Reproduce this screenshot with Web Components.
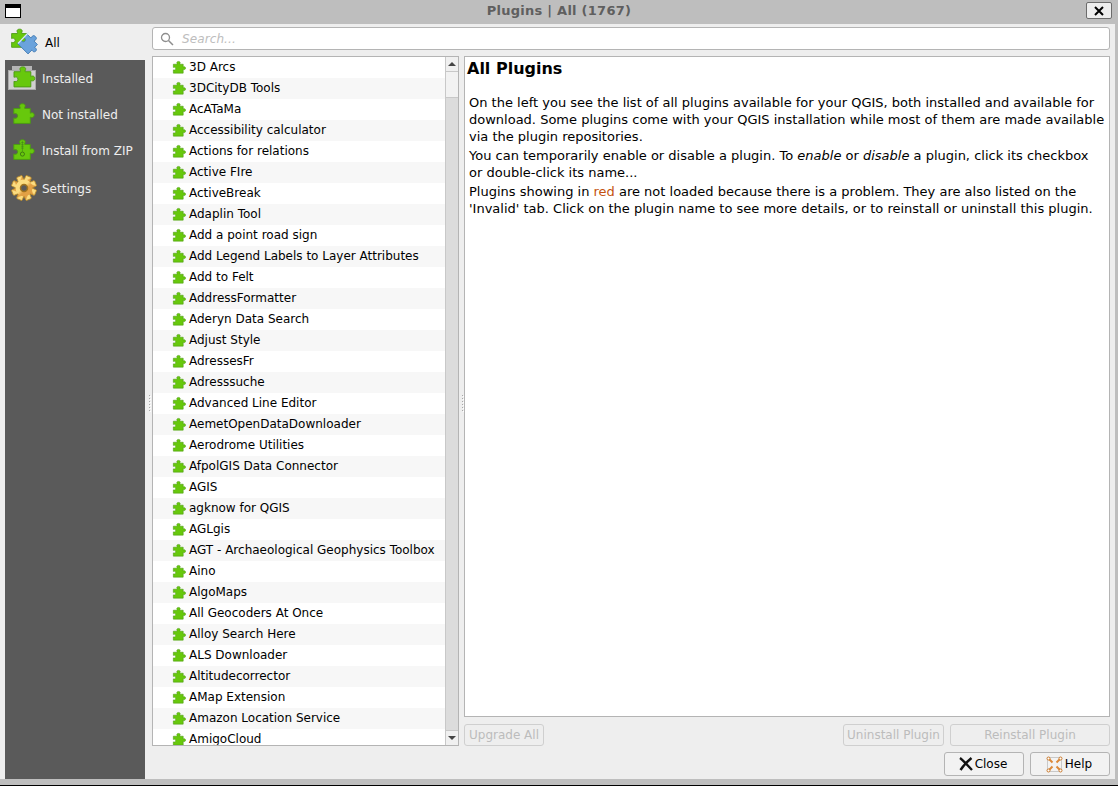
<!DOCTYPE html>
<html>
<head>
<meta charset="utf-8">
<title>Plugins</title>
<style>
html, body { margin: 0; height: 100%; background: #bebebe; overflow: hidden; }
body { font: 12px "DejaVu Sans", sans-serif; }
</style>
</head>
<body>
<qgis-plugin-manager></qgis-plugin-manager>

<script>
const PUZZLE = 'M6.500 3.600C6 3 6 1.500 8 1.500S10 3 9.500 3.600V4.500H13V7.500C13.700 7 15.500 7 15.500 8.700S13.700 10.400 13 10V14H2.500V10.500C3 11 5 10.800 5 9.200S3 7.500 2.500 8V4.500H6.500z'
const GREEN = 'fill="#67c80c" stroke="#4c9a14" stroke-width=".6"'

function puzzle(size, box = '0 0 16 16'){
    return `<svg width="${size}" height="${size}" viewBox="${box}"><path d="${PUZZLE}" ${GREEN}/></svg>`
}

function gear(){
    let teeth = ''
    for(let a = 0; a < 360; a += 45){
        teeth += `<rect x="10" y="0.500" width="6" height="7" rx="1" transform="rotate(${a} 13 13)"/>`
    }
    return `<svg width="26" height="26" viewBox="0 0 26 26">
        <defs><linearGradient id="g" x1="0" y1="0" x2="1" y2="1"><stop offset=".45" stop-color="#fbdc80"/><stop offset=".6" stop-color="#e2a044"/></linearGradient></defs>
        <g fill="url(#g)" stroke="#b98a2a" stroke-width=".8" transform="translate(13 13) rotate(22.500) translate(-13 -13)">${teeth}</g>
        <circle cx="13" cy="13" r="8.500" fill="url(#g)"/>
        <circle cx="13" cy="13" r="3.500" fill="#5a5a5a" stroke="#a0741f" stroke-width="1.500"/>
    </svg>`
}

const ICONS = {
    all: `<svg width="30" height="28" viewBox="0 0 30 28">
        <path d="${PUZZLE}" ${GREEN} transform="translate(-2 -1) scale(1.450)"/>
        <path d="${PUZZLE}" fill="#6ba3dc" stroke="#3f78b0" stroke-width=".6" transform="translate(19 16) rotate(45) scale(1.400) translate(-8.500 -8.500)"/>
        <path d="M8 15.500L19 4" stroke="#d8e8f8" stroke-width="1.200"/>
    </svg>`,
    installed: `<svg width="28" height="24" viewBox="0 0 28 24" style="margin-left:-3px">
        <rect x="4" y="0" width="20" height="5" fill="#b5b5b5"/>
        <rect x=".5" y="4.500" width="27" height="19" fill="#d0d0d0" stroke="#a9a9a9"/>
        <path d="${PUZZLE}" ${GREEN} transform="translate(2 -1.500) scale(1.600)"/>
    </svg>`,
    missing: puzzle(22, '2 1 14 14'),
    zip: `<svg width="22" height="22" viewBox="2 1 14 14">
        <path d="${PUZZLE}" ${GREEN}/>
        <path d="M7.200 3.200h1.600M7.200 4.400h1.600M7.200 5.600h1.600M7.200 6.800h1.600M8 2.400V9" stroke="#3d7a1c" stroke-width=".35"/>
        <circle cx="8" cy="10.600" r="1.300" fill="none" stroke="#2f5e12" stroke-width=".45"/>
    </svg>`,
    settings: gear()
}

const PLUGINS = [
    '3D Arcs', '3DCityDB Tools', 'AcATaMa', 'Accessibility calculator', 'Actions for relations',
    'Active FIre', 'ActiveBreak', 'Adaplin Tool', 'Add a point road sign', 'Add Legend Labels to Layer Attributes',
    'Add to Felt', 'AddressFormatter', 'Aderyn Data Search', 'Adjust Style', 'AdressesFr',
    'Adresssuche', 'Advanced Line Editor', 'AemetOpenDataDownloader', 'Aerodrome Utilities', 'AfpolGIS Data Connector',
    'AGIS', 'agknow for QGIS', 'AGLgis', 'AGT - Archaeological Geophysics Toolbox', 'Aino',
    'AlgoMaps', 'All Geocoders At Once', 'Alloy Search Here', 'ALS Downloader', 'Altitudecorrector',
    'AMap Extension', 'Amazon Location Service', 'AmigoCloud'
]


class TitleBar extends HTMLElement{
    connectedCallback(){
        this.attachShadow({mode:'open'}).innerHTML = `
        <style>
        :host { display: flex; align-items: center; height: 24px; background: #bebebe; position: relative; flex: none; }
        #menu { position: absolute; left: 5px; top: 4px; width: 14px; height: 9px; border: 1px solid #000; border-top-width: 4px; background: #fff; }
        #title { flex: 1; text-align: center; font: bold 13px "DejaVu Sans", sans-serif; color: #5f5f5f; letter-spacing: .25px; margin-top: -4px; }
        #close { position: absolute; left: 1086px; top: 2px; width: 26px; height: 17px; box-sizing: border-box; border: 1px solid #6c6c6c; border-radius: 2px; background: #eee; display: flex; align-items: center; justify-content: center; }
        </style>
        <div id="menu"></div>
        <div id="title"><slot></slot></div>
        <div id="close"><svg width="10" height="10" viewBox="0 0 10 10"><path d="M1 1l8 8M9 1L1 9" stroke="#000" stroke-width="2"/></svg></div>
        `
    }
}


class SideItem extends HTMLElement{
    connectedCallback(){
        const active = this.hasAttribute('active')
        this.attachShadow({mode:'open'}).innerHTML = `
        <style>
        :host { display: flex; align-items: center; height: ${this.getAttribute('h') || 36}px; color: ${active ? '#000' : '#eee'}; background: ${active ? '#eee' : 'transparent'}; font-size: 12px; }
        #icon { width: ${active ? 40 : 37}px; flex: none; display: flex; justify-content: center; }
        #label { padding-top: 2px; }
        </style>
        <div id="icon">${ICONS[this.getAttribute('icon')]}</div>
        <div id="label"><slot></slot></div>
        `
    }
}


class SideBar extends HTMLElement{
    connectedCallback(){
        this.attachShadow({mode:'open'}).innerHTML = `
        <style>
        :host { display: block; width: 140px; margin-left: 5px; flex: none; background: #5a5a5a; }
        </style>
        <slot></slot>
        `
    }
}


class SplitHandle extends HTMLElement{
    connectedCallback(){
        const dots = '<i></i>'.repeat(6)
        this.attachShadow({mode:'open'}).innerHTML = `
        <style>
        :host { display: flex; flex-direction: column; justify-content: center; gap: 2px; flex: none; box-sizing: border-box; width: ${this.getAttribute('w')}px; padding: ${this.getAttribute('top')}px 0 0 ${this.getAttribute('x')}px; }
        i { display: block; width: 1px; height: 1px; background: #a8a8a8; box-shadow: 1px 1px #fff; }
        </style>
        ${dots}
        `
    }
}


class SearchBox extends HTMLElement{
    connectedCallback(){
        this.attachShadow({mode:'open'}).innerHTML = `
        <style>
        :host { display: flex; align-items: center; height: 23px; box-sizing: border-box; background: #fff; border: 1px solid #b4b4b4; border-radius: 3px; padding-left: 7px; gap: 8px; flex: none; }
        span { font: italic 12px "DejaVu Sans", sans-serif; color: #bdbdbd; letter-spacing: .1px; }
        </style>
        <svg width="14" height="14" viewBox="0 0 14 14"><circle cx="5.500" cy="5.500" r="4" fill="none" stroke="#8e8e8e" stroke-width="1.300"/><path d="M8.500 8.500l4.500 4.500" stroke="#8e8e8e" stroke-width="1.500"/></svg>
        <span>${this.getAttribute('placeholder')}</span>
        `
    }
}


class PluginRow extends HTMLElement{
    connectedCallback(){
        this.attachShadow({mode:'open'}).innerHTML = `
        <style>
        :host { display: flex; align-items: center; height: 21px; box-sizing: border-box; padding: 0 0 2px 18px; flex: none; gap: 3px; white-space: nowrap; color: #000; font-size: 12px; }
        :host(:nth-child(even)) { background: #f7f7f7; }
        svg { flex: none; margin-top: 2px; }
        </style>
        ${puzzle(15)}
        <slot></slot>
        `
    }
}


class PluginList extends HTMLElement{
    connectedCallback(){
        this.attachShadow({mode:'open'}).innerHTML = `
        <style>
        :host { display: flex; width: 307px; box-sizing: border-box; border: 1px solid #b4b4b4; background: #fff; flex: none; overflow: hidden; }
        #rows { flex: 1; display: flex; flex-direction: column; overflow: hidden; min-width: 0; }
        #bar { width: 13px; box-sizing: border-box; flex: none; display: flex; flex-direction: column; border-left: 1px solid #c8c8c8; background: #dcdcdc; }
        .arrow { height: 15px; flex: none; background: #f0f0f0; display: flex; align-items: center; justify-content: center; box-sizing: border-box; }
        .arrow i { width: 0; height: 0; border: 4px solid transparent; }
        #up { border-bottom: 1px solid #c8c8c8; }
        #up i { border-bottom: 4px solid #444; border-top-width: 0; }
        #down { border-top: 1px solid #c8c8c8; margin-top: auto; }
        #down i { border-top: 4px solid #444; border-bottom-width: 0; }
        #thumb { height: 26px; flex: none; background: #f2f2f2; border-bottom: 1px solid #c8c8c8; box-sizing: border-box; }
        </style>
        <div id="rows"><slot></slot></div>
        <div id="bar">
            <div class="arrow" id="up"><i></i></div>
            <div id="thumb"></div>
            <div class="arrow" id="down"><i></i></div>
        </div>
        `
        for(const name of PLUGINS){
            const row = document.createElement('plugin-row')
            row.textContent = name
            this.append(row)
        }
    }
}


class PluginDetails extends HTMLElement{
    connectedCallback(){
        this.attachShadow({mode:'open'}).innerHTML = `
        <style>
        :host { display: block; flex: 1; box-sizing: border-box; border: 1px solid #b4b4b4; background: #fff; padding: 2px 2px; color: #000; font-size: 13px; line-height: 17px; }
        h3 { font-size: 16px; line-height: 20px; margin: 0 0 15px; }
        p { margin: 0 2px 2px; white-space: nowrap; }
        .red { color: #c4520f; }
        </style>
        <h3>All Plugins</h3>
        <p>On the left you see the list of all plugins available for your QGIS, both installed and available for<br>download. Some plugins come with your QGIS installation while most of them are made available<br>via the plugin repositories.</p>
        <p>You can temporarily enable or disable a plugin. To <i>enable</i> or <i>disable</i> a plugin, click its checkbox<br>or double-click its name...</p>
        <p>Plugins showing in <span class="red">red</span> are not loaded because there is a problem. They are also listed on the<br>'Invalid' tab. Click on the plugin name to see more details, or to reinstall or uninstall this plugin.</p>
        `
    }
}


class DialogButton extends HTMLElement{
    connectedCallback(){
        const disabled = this.hasAttribute('disabled')
        const icon = {
            close: `<svg width="14" height="14" viewBox="0 0 14 14"><path d="M1 1c3 2 8 8 12 12M12.500 1C9 4 4 9 1.500 13" stroke="#111" stroke-width="2.400" fill="none"/></svg>`,
            help: `<svg width="17" height="17" viewBox="0 0 17 17"><rect x="1.500" y="1.500" width="14" height="14" fill="#f3f3f3" stroke="#c9c9c9"/><path d="M3 3l3.500 3.500M14 3l-3.500 3.500M3 14l3.500-3.500M14 14l-3.500-3.500" stroke="#dd8a3a" stroke-width="2"/><g fill="#fff" stroke="#cc7a2a"><circle cx="2.500" cy="2.500" r="1.500"/><circle cx="14.500" cy="2.500" r="1.500"/><circle cx="2.500" cy="14.500" r="1.500"/><circle cx="14.500" cy="14.500" r="1.500"/></g></svg>`
        }[this.getAttribute('icon')] || ''
        this.attachShadow({mode:'open'}).innerHTML = `
        <style>
        :host { display: flex; align-items: center; justify-content: center; gap: 2px; height: ${disabled ? 22 : 24}px; box-sizing: border-box; width: ${this.getAttribute('w')}px; padding-right: ${icon ? 2 : 0}px; flex: none; border: 1px solid ${disabled ? '#cfcfcf' : '#b4b4b4'}; border-radius: 3px; background: ${disabled ? '#eee' : '#f2f2f2'}; color: ${disabled ? '#bcbcbc' : '#000'}; font-size: 12px; white-space: nowrap; }
        </style>
        ${icon}<slot></slot>
        `
    }
}


class PluginManager extends HTMLElement{
    connectedCallback(){
        this.attachShadow({mode:'open'}).innerHTML = `
        <style>
        :host { display: flex; flex-direction: column; height: 786px; background: #bebebe; font: 12px "DejaVu Sans", sans-serif; }
        #body { display: flex; height: 755px; flex: none; margin-right: 3px; background: #eee; }
        #main { flex: 1; min-width: 0; display: flex; flex-direction: column; padding: 3px 5px 3px 0; }
        #split { flex: 1; min-height: 0; display: flex; margin-top: 6px; }
        #right { flex: 1; min-width: 0; display: flex; flex-direction: column; }
        #actions { display: flex; flex: none; margin-top: 7px; gap: 6px; }
        #actions .grow { flex: 1; }
        #footer { display: flex; justify-content: flex-end; gap: 6px; flex: none; margin-top: 6px; }
        #bottom { height: 6px; flex: none; }
        #edge { height: 1px; flex: none; background: #000; }
        </style>
        <title-bar>Plugins | All (1767)</title-bar>
        <div id="body">
            <side-bar>
                <side-item icon="all" active>All</side-item>
                <side-item icon="installed">Installed</side-item>
                <side-item icon="missing">Not installed</side-item>
                <side-item icon="zip">Install from ZIP</side-item>
                <side-item icon="settings" h="40">Settings</side-item>
            </side-bar>
            <split-handle w="7" x="4" top="2"></split-handle>
            <div id="main">
                <search-box placeholder="Search..."></search-box>
                <div id="split">
                    <plugin-list></plugin-list>
                    <split-handle w="5" x="3" top="3"></split-handle>
                    <div id="right">
                        <plugin-details></plugin-details>
                        <div id="actions">
                            <dialog-button w="80" disabled>Upgrade All</dialog-button>
                            <div class="grow"></div>
                            <dialog-button w="101" disabled>Uninstall Plugin</dialog-button>
                            <dialog-button w="160" disabled>Reinstall Plugin</dialog-button>
                        </div>
                    </div>
                </div>
                <div id="footer">
                    <dialog-button w="80" icon="close">Close</dialog-button>
                    <dialog-button w="80" icon="help">Help</dialog-button>
                </div>
            </div>
        </div>
        <div id="bottom"></div>
        <div id="edge"></div>
        `
    }
}


customElements.define('title-bar', TitleBar)
customElements.define('side-item', SideItem)
customElements.define('side-bar', SideBar)
customElements.define('split-handle', SplitHandle)
customElements.define('search-box', SearchBox)
customElements.define('plugin-row', PluginRow)
customElements.define('plugin-list', PluginList)
customElements.define('plugin-details', PluginDetails)
customElements.define('dialog-button', DialogButton)
customElements.define('qgis-plugin-manager', PluginManager)
</script>
</body>
</html>
